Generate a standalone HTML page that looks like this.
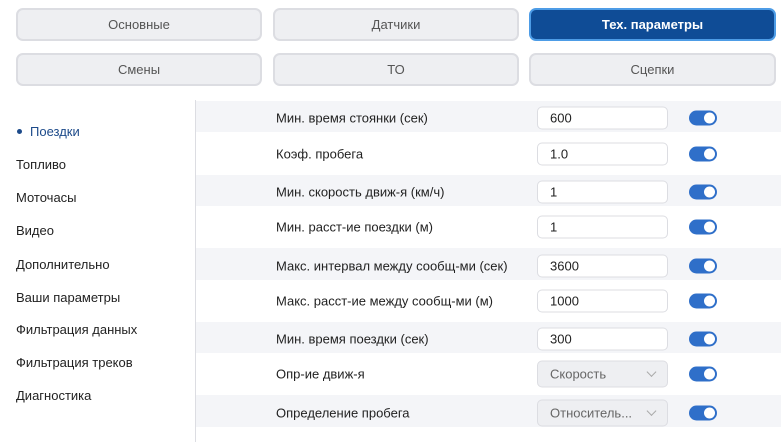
<!DOCTYPE html>
<html><head><meta charset="utf-8"><style>
*{box-sizing:border-box;margin:0;padding:0}
body{width:781px;height:442px;overflow:hidden;background:#fff;font-family:"Liberation Sans",sans-serif;color:#222;position:relative}
.btn{position:absolute;height:33px;border:2px solid #dcdde2;background:#eeeff2;border-radius:7px;font-size:13px;color:#555;display:flex;align-items:center;justify-content:center}
.btn.act{background:#0f4c96;border-color:#4d9ce6;color:#fff;font-weight:bold}
.side{position:absolute;left:16px;font-size:13px;color:#222}
.vline{position:absolute;left:195px;top:100px;width:1px;height:342px;background:#dcdde2}
.row{position:absolute;left:196px;width:585px}
.row.g{background:#f4f5f8}
.c{position:absolute;left:0;right:0;top:0;bottom:0}
.g .c{top:3px}
.lbl{position:absolute;left:80px;font-size:13px;color:#222;top:50%;transform:translateY(-50%)}
.inp{position:absolute;left:341px;width:131px;height:23px;border:1px solid #dcdde2;background:#fff;border-radius:5px;font-size:13px;padding-left:12px;line-height:21px;top:50%;transform:translateY(-50%)}
.sel{background:#eeeff2;color:#666}
.sel:after{content:"";position:absolute;right:12px;top:7px;width:6px;height:6px;border-right:1px solid #aaa;border-bottom:1px solid #aaa;transform:rotate(45deg)}
.tg{position:absolute;left:493px;width:28px;height:15px;border-radius:8px;background:#2f6fc9;top:50%;transform:translateY(-50%)}
.tg:after{content:"";position:absolute;right:2px;top:2px;width:11px;height:11px;border-radius:50%;background:#fff}
</style></head><body>
<div class="btn" style="left:16px;top:8px;width:246px">Основные</div>
<div class="btn" style="left:273px;top:8px;width:246px">Датчики</div>
<div class="btn act" style="left:529px;top:8px;width:247px">Тех. параметры</div>
<div class="btn" style="left:16px;top:53px;width:246px">Смены</div>
<div class="btn" style="left:273px;top:53px;width:246px">ТО</div>
<div class="btn" style="left:529px;top:53px;width:247px">Сцепки</div>

<div class="side" style="top:124px;color:#1c4a8a"><span style="display:inline-block;width:5px;height:5px;border-radius:50%;background:#1c4a8a;margin:0 8px 2px 1px;vertical-align:middle"></span>Поездки</div>
<div class="side" style="top:157px">Топливо</div>
<div class="side" style="top:190px">Моточасы</div>
<div class="side" style="top:223px">Видео</div>
<div class="side" style="top:257px">Дополнительно</div>
<div class="side" style="top:290px">Ваши параметры</div>
<div class="side" style="top:322px">Фильтрация данных</div>
<div class="side" style="top:355px">Фильтрация треков</div>
<div class="side" style="top:388px">Диагностика</div>
<div class="vline"></div>

<div class="row g" style="top:101px;height:31px"><div class="c"><div class="lbl">Мин. время стоянки (сек)</div><div class="inp">600</div><div class="tg"></div></div></div>
<div class="row" style="top:132px;height:43px"><div class="c"><div class="lbl">Коэф. пробега</div><div class="inp">1.0</div><div class="tg"></div></div></div>
<div class="row g" style="top:175px;height:31px"><div class="c"><div class="lbl">Мин. скорость движ-я (км/ч)</div><div class="inp">1</div><div class="tg"></div></div></div>
<div class="row" style="top:206px;height:42px"><div class="c"><div class="lbl">Мин. расст-ие поездки (м)</div><div class="inp">1</div><div class="tg"></div></div></div>
<div class="row g" style="top:248px;height:32px"><div class="c"><div class="lbl">Макс. интервал между сообщ-ми (сек)</div><div class="inp">3600</div><div class="tg"></div></div></div>
<div class="row" style="top:280px;height:42px"><div class="c"><div class="lbl">Макс. расст-ие между сообщ-ми (м)</div><div class="inp">1000</div><div class="tg"></div></div></div>
<div class="row g" style="top:322px;height:31px"><div class="c"><div class="lbl">Мин. время поездки (сек)</div><div class="inp">300</div><div class="tg"></div></div></div>
<div class="row" style="top:353px;height:42px"><div class="c"><div class="lbl">Опр-ие движ-я</div><div class="inp sel" style="height:27px;line-height:25px">Скорость</div><div class="tg"></div></div></div>
<div class="row g" style="top:395px;height:32px"><div class="c"><div class="lbl">Определение пробега</div><div class="inp sel" style="height:27px;line-height:25px">Относитель...</div><div class="tg"></div></div></div>
</body></html>
